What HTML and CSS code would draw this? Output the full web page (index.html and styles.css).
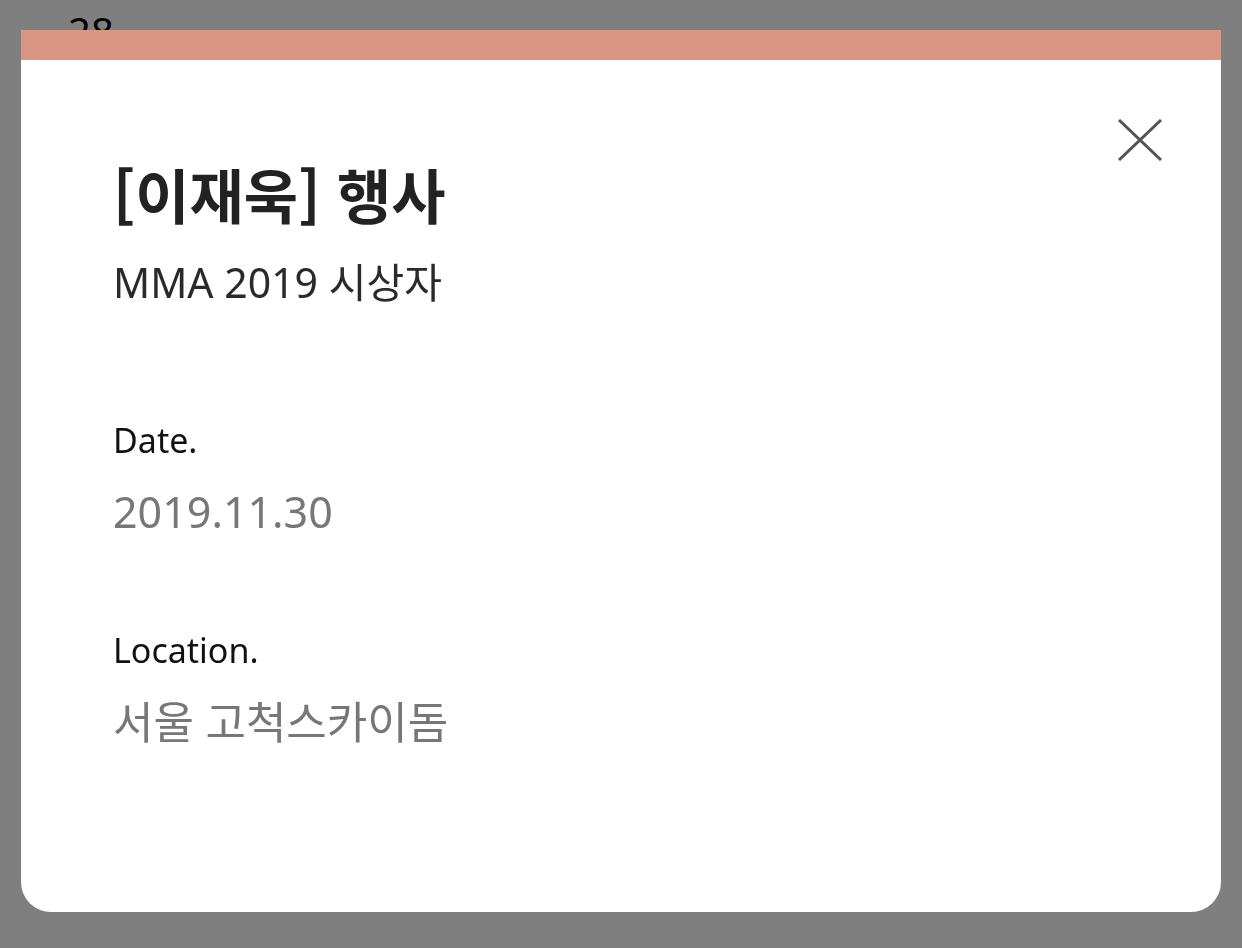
FILE: index.html
```html
<!DOCTYPE html>
<html lang="ko">
<head>
<meta charset="utf-8">
<title>Event</title>
<link rel="stylesheet" href="styles.css">
</head>
<body>
<div class="page">
  <div class="day">28</div>
</div>
<div class="overlay">
  <div class="modal">
    <div class="modal-bar"></div>
    <div class="modal-body">
      <button class="close" aria-label="close">
        <svg width="46" height="42" viewBox="0 0 46 42"><path d="M2 1 L44 41 M44 1 L2 41" stroke="#555" stroke-width="3" fill="none"/></svg>
      </button>
      <h1 class="title">[이재욱] 행사</h1>
      <p class="subtitle">MMA 2019 시상자</p>
      <div class="field">
        <div class="label">Date.</div>
        <div class="value">2019.11.30</div>
      </div>
      <div class="field">
        <div class="label">Location.</div>
        <div class="value value-ko">서울 고척스카이돔</div>
      </div>
    </div>
  </div>
</div>
</body>
</html>
```
FILE: styles.css
```css
html, body {
  margin: 0;
  padding: 0;
  height: 100%;
}
body {
  background: #ffffff;
  font-family: "Noto Sans", "Noto Sans CJK KR", sans-serif;
  color: #222;
}
.page {
  padding: 0 0 0 68px;
}
.day {
  font-size: 40px;
  line-height: 1;
  padding-top: 12px;
  color: #000;
}
.overlay {
  position: fixed;
  inset: 0;
  background: rgba(0, 0, 0, 0.5);
  padding: 30px 21px 36px 21px;
}
.modal {
  width: 1200px;
  height: 882px;
  background: #fff;
  border-radius: 0 0 30px 30px;
  overflow: hidden;
  display: flex;
  flex-direction: column;
}
.modal-bar {
  height: 30px;
  background: #d99682;
  flex: none;
}
.modal-body {
  position: relative;
  padding: 99px 92px 0 92px;
}
.close {
  position: absolute;
  top: 59px;
  right: 58px;
  border: 0;
  background: none;
  padding: 0;
  margin: 0;
  line-height: 0;
}
.title {
  margin: 0;
  font-size: 59px;
  font-weight: 700;
  line-height: 1.2;
  color: #222;
  font-family: "Noto Sans CJK KR", "Noto Sans", sans-serif;
}
.subtitle {
  margin: 26px 0 0 0;
  font-size: 41px;
  line-height: 1.3;
  color: #2a2a2a;
}
.field {
  margin-top: 109px;
}
.field + .field {
  margin-top: 88px;
}
.label {
  font-size: 34px;
  line-height: 1.3;
  color: #111;
}
.value {
  margin-top: 22px;
  font-size: 43px;
  line-height: 1.3;
  color: #777;
}
.value-ko {
  font-size: 44px;
}
```
